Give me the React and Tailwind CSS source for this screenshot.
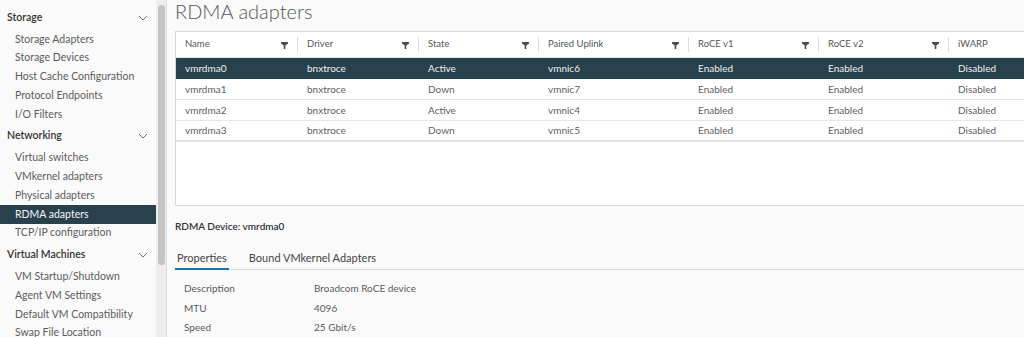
import React from "react";

const font = { fontFamily: "Lato, 'Noto Sans', sans-serif" };

const groups = [
  {
    title: "Storage",
    items: ["Storage Adapters", "Storage Devices", "Host Cache Configuration", "Protocol Endpoints", "I/O Filters"],
  },
  {
    title: "Networking",
    items: ["Virtual switches", "VMkernel adapters", "Physical adapters", "RDMA adapters", "TCP/IP configuration"],
  },
  {
    title: "Virtual Machines",
    items: ["VM Startup/Shutdown", "Agent VM Settings", "Default VM Compatibility", "Swap File Location"],
  },
];

const columns = [
  { name: "Name", w: "w-[121px]" },
  { name: "Driver", w: "w-[121px]" },
  { name: "State", w: "w-[120px]" },
  { name: "Paired Uplink", w: "w-[150px]" },
  { name: "RoCE v1", w: "w-[130px]" },
  { name: "RoCE v2", w: "w-[130px]" },
  { name: "iWARP", w: "w-[130px]" },
];

const rows = [
  ["vmrdma0", "bnxtroce", "Active", "vmnic6", "Enabled", "Enabled", "Disabled"],
  ["vmrdma1", "bnxtroce", "Down", "vmnic7", "Enabled", "Enabled", "Disabled"],
  ["vmrdma2", "bnxtroce", "Active", "vmnic4", "Enabled", "Enabled", "Disabled"],
  ["vmrdma3", "bnxtroce", "Down", "vmnic5", "Enabled", "Enabled", "Disabled"],
];

const Chevron = () => (
  <svg width="10" height="6" viewBox="0 0 10 6" className="text-gray-500">
    <path d="M1 1 L5 5 L9 1" fill="none" stroke="currentColor" strokeWidth="1" />
  </svg>
);

const Funnel = () => (
  <svg width="7" height="7" viewBox="0 0 7 7">
    <path d="M0 0 H7 V1.5 L4.3 3.5 V7 H2.7 V3.5 L0 1.5 Z" fill="#4a4a4a" />
  </svg>
);

const Sidebar = () => (
  <div className="w-[156px] shrink-0 bg-[#fafafa] pt-[5px]">
    {groups.map((g) => (
      <div key={g.title}>
        <div className="h-[25px] flex items-center justify-between pl-[7px] pr-[8px] text-[10.5px] font-semibold text-[#333]">
          <span>{g.title}</span>
          <Chevron />
        </div>
        {g.items.map((item) => (
          <div
            key={item}
            className={`h-[18.75px] flex items-center pl-[15px] text-[10.5px] ${
              item === "RDMA adapters" ? "bg-[#29404d] text-[#f4f6f7]" : "text-[#5c5c5c]"
            }`}
          >
            {item}
          </div>
        ))}
      </div>
    ))}
  </div>
);

const Scrollbar = () => (
  <div className="w-[11px] shrink-0 bg-[#ededed] border-r border-[#dcdcdc] pt-[5px] flex justify-center">
    <div className="w-[7px] h-[260px] rounded-full bg-[#c3c3c3]" />
  </div>
);

const Table = () => (
  <div className="w-[900px] bg-white border border-[#d7d7d7] h-[175px]">
    <div className="flex h-[26px] border-b border-[#e0e0e0]">
      {columns.map((c, i) => (
        <div key={c.name} className={`${c.w} shrink-0 flex items-center relative`}>
          {i > 0 && <div className="w-px h-[15px] bg-[#dedede]" />}
          <span className="text-[9.5px] text-[#555] pl-[9px]">{c.name}</span>
          {i < 6 && (
            <span className="absolute right-[9px] top-[10px]">
              <Funnel />
            </span>
          )}
        </div>
      ))}
    </div>
    {rows.map((r, ri) => (
      <div
        key={r[0]}
        className={`flex h-[21px] items-center border-b ${
          ri === 0 ? "bg-[#29404d] text-[#eef1f3] border-[#29404d]" : "text-[#606060] border-[#e6e6e6]"
        } ${ri === rows.length - 1 ? "border-b-2 border-[#dcdcdc]" : ""}`}
      >
        {r.map((cell, ci) => (
          <div key={ci} className={`${columns[ci].w} shrink-0 text-[10px] ${ci === 0 ? "pl-[9px]" : "pl-[10px]"}`}>
            {cell}
          </div>
        ))}
      </div>
    ))}
  </div>
);

export default function App() {
  return (
    <div className="w-[1024px] h-[337px] overflow-hidden flex bg-[#fafafa]" style={font}>
      <Sidebar />
      <Scrollbar />
      <div className="flex-1 overflow-hidden pl-[8px]">
        <div className="h-[31px] flex items-center">
          <h1 className="text-[20px] font-light text-[#555] leading-none -mt-[9px]">RDMA adapters</h1>
        </div>
        <Table />
        <div className="mt-[13px] text-[10px] font-semibold text-[#333]">RDMA Device: vmrdma0</div>
        <div className="mt-[16px] flex border-b border-[#d6d6d6] text-[11px] text-[#444] h-[20px]">
          <div className="px-[2px] border-b-2 border-[#1a73a8] h-[20px]">Properties</div>
          <div className="ml-[20px]">Bound VMkernel Adapters</div>
        </div>
        <div className="pt-[9px] text-[10px] text-[#5a5a5a]">
          {[
            ["Description", "Broadcom RoCE device"],
            ["MTU", "4096"],
            ["Speed", "25 Gbit/s"],
          ].map(([k, v]) => (
            <div key={k} className="flex h-[19.5px] items-center">
              <div className="w-[139px] pl-[9px]">{k}</div>
              <div>{v}</div>
            </div>
          ))}
        </div>
      </div>
    </div>
  );
}
